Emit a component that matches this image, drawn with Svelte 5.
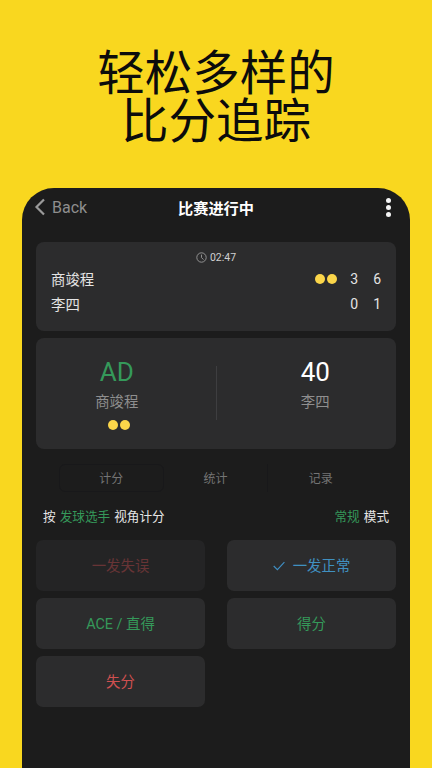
<script>
  const buttons = [
    { label: "一发失误", tone: "fault", dim: true },
    { label: "一发正常", tone: "blue", checked: true },
    { label: "ACE / 直得", tone: "green" },
    { label: "得分", tone: "green" },
    { label: "失分", tone: "red" },
  ];
  const tabs = ["计分", "统计", "记录"];
</script>

<main class="page">
  <h1>轻松多样的<br />比分追踪</h1>

  <section class="phone">
    <header class="nav">
      <div class="back">
        <svg width="12" height="18" viewBox="0 0 12 18"><path d="M10 1.5 2.5 9l7.5 7.5" fill="none" stroke="#9a9a9a" stroke-width="2.2" /></svg>
        <span>Back</span>
      </div>
      <div class="title">比赛进行中</div>
      <div class="more"><i></i><i></i><i></i></div>
    </header>

    <div class="card score">
      <div class="timer">
        <svg width="11" height="11" viewBox="0 0 11 11"><circle cx="5.5" cy="5.5" r="4.7" fill="none" stroke="#aaa" stroke-width=".8" /><path d="M5.5 2.6v3l2 2" fill="none" stroke="#aaa" stroke-width=".8" /></svg>
        <span>02:47</span>
      </div>
      <div class="line">
        <span class="name">商竣程</span>
        <span class="dots"><i></i><i></i></span>
        <span class="num">3</span><span class="num">6</span>
      </div>
      <div class="line">
        <span class="name">李四</span>
        <span class="num">0</span><span class="num">1</span>
      </div>
    </div>

    <div class="card points">
      <div class="side left">
        <div class="big green">AD</div>
        <div class="who">商竣程</div>
        <div class="balls"><i></i><i></i></div>
      </div>
      <div class="rule"></div>
      <div class="side right">
        <div class="big">40</div>
        <div class="who">李四</div>
      </div>
    </div>

    <nav class="tabs">
      {#each tabs as t, i}
        <div class="tab" class:on={i === 0}>{t}</div>
      {/each}
    </nav>

    <div class="mode">
      <span>按 <b>发球选手</b> 视角计分</span>
      <span><b>常规</b> 模式</span>
    </div>

    <div class="grid">
      {#each buttons as b}
        <button class="btn {b.tone}" class:dim={b.dim}>
          {#if b.checked}
            <svg width="12" height="10" viewBox="0 0 12 10"><path d="M.7 5 4.4 8.7 11.4 1.2" fill="none" stroke="#3f8fc4" stroke-width="1.1" /></svg>
          {/if}
          <span class="lbl">{b.label}</span>
        </button>
      {/each}
    </div>
  </section>
</main>

<style>
  :global(body) {
    margin: 0;
    background: #f9d71f;
  }
  .page {
    width: 432px;
    height: 768px;
    overflow: hidden;
    background: #f9d71f;
    font-family: Roboto, "Noto Sans CJK SC", sans-serif;
    display: flex;
    flex-direction: column;
    align-items: center;
  }
  h1 {
    margin: 0;
    box-sizing: content-box;
    padding-top: 46px;
    height: 96px;
    padding-bottom: 46px;
    font: 400 47.5px/48px "Noto Sans CJK SC", sans-serif;
    color: #0c0c0c;
    text-align: center;
  }
  .phone {
    width: 388px;
    flex: 1;
    box-sizing: border-box;
    padding: 0 14px;
    background: #1c1c1c;
    border-radius: 32px 32px 0 0;
  }
  .nav {
    height: 38px;
    margin-bottom: 16px;
    display: grid;
    grid-template-columns: 1fr auto 1fr;
    align-items: center;
  }
  .back {
    display: flex;
    align-items: center;
    gap: 6px;
    margin-left: -2px;
    color: #8e8e8e;
    font-size: 16px;
  }
  .title {
    color: #fff;
    font-size: 15.2px;
    font-weight: 700;
  }
  .more {
    justify-self: end;
    display: flex;
    flex-direction: column;
    gap: 2px;
    margin-right: 5.5px;
  }
  .more i {
    width: 5px;
    height: 5px;
    border-radius: 50%;
    background: #f4f4f4;
  }
  .card {
    background: #2c2c2d;
    border-radius: 8px;
  }
  .score {
    height: 89px;
    box-sizing: border-box;
    padding: 8px 15px 0;
  }
  .timer {
    display: flex;
    justify-content: center;
    align-items: center;
    gap: 3px;
    color: #d0d0d0;
    font-size: 10.5px;
    height: 14px;
  }
  .line {
    display: flex;
    align-items: center;
    height: 25px;
    color: #e4e4e4;
    font-size: 14.4px;
  }
  .line:nth-child(2) {
    margin-top: 2px;
  }
  .name {
    flex: 1;
  }
  .dots {
    display: flex;
    gap: 2.5px;
    margin-right: -2px;
  }
  .dots i,
  .balls i {
    width: 10px;
    height: 10px;
    border-radius: 50%;
    background: #fbd64a;
  }
  .num {
    width: 23px;
    text-align: right;
    font-size: 14px;
  }
  .points {
    margin-top: 7px;
    height: 111px;
    display: flex;
    align-items: flex-start;
  }
  .side {
    flex: 1;
    display: flex;
    flex-direction: column;
    align-items: center;
    padding-top: 18px;
  }
  .left {
    padding-right: 18px;
  }
  .right {
    padding-left: 18px;
  }
  .big {
    font-size: 26px;
    line-height: 32px;
    color: #fff;
  }
  .green {
    color: #35995a;
  }
  .who {
    margin-top: 5px;
    font-size: 14.4px;
    line-height: 20px;
    color: #8f8f8f;
  }
  .balls {
    display: flex;
    gap: 2.5px;
    margin-top: 7px;
    margin-left: 4px;
  }
  .rule {
    width: 1px;
    height: 54px;
    margin-top: 28px;
    background: #3e3e40;
  }
  .tabs {
    margin: 15px 23px 0;
    height: 28px;
    display: grid;
    grid-template-columns: repeat(3, 1fr);
    font-size: 12px;
    color: #747474;
  }
  .tab {
    display: flex;
    align-items: center;
    justify-content: center;
    padding-bottom: 2px;
  }
  .tab:nth-child(2) {
    border-right: 1px solid #18181a;
  }
  .tab.on {
    border: 1px solid #18181a;
    border-radius: 6px;
  }
  .mode {
    margin: 12px 7px 0;
    display: flex;
    justify-content: space-between;
    font-size: 12.6px;
    line-height: 26px;
    word-spacing: 1px;
    color: #e6e6e6;
  }
  .mode b {
    font-weight: 400;
    color: #35995a;
  }
  .grid {
    margin-top: 10px;
    display: grid;
    grid-template-columns: 169px 169px;
    justify-content: space-between;
    row-gap: 7px;
  }
  .btn {
    height: 51px;
    border: none;
    border-radius: 7px;
    background: #2c2c2d;
    font: inherit;
    font-size: 14.4px;
    display: flex;
    align-items: center;
    justify-content: center;
    gap: 8px;
  }
  .lbl {
    padding-bottom: 2px;
  }
  .btn.green { color: #35995a; }
  .btn.red { color: #d05050; }
  .btn.blue { color: #4090c0; }
  .btn.fault { color: #683436; }
  .btn.dim { background: #242425; }
</style>
